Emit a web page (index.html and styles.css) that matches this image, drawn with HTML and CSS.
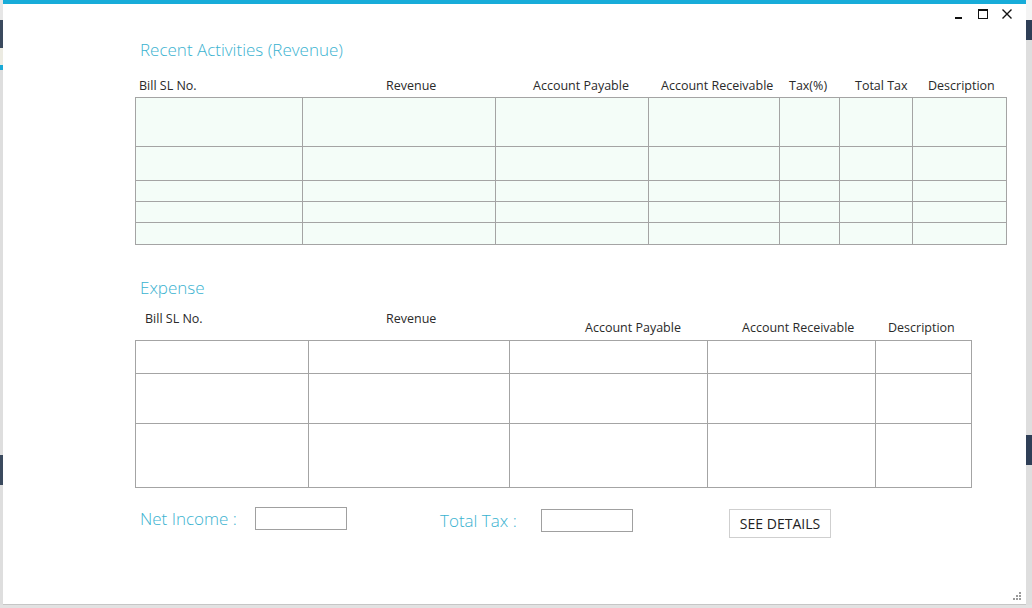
FILE: index.html
```html
<!DOCTYPE html>
<html>
<head>
<meta charset="utf-8">
<link rel="stylesheet" href="styles.css">
</head>
<body>
<div class="screen">
  <div class="strip strip-left">
    <div class="band b-light h20"></div>
    <div class="band b-dark h28"></div>
    <div class="band b-pale h17"></div>
    <div class="band b-cyan h5"></div>
    <div class="band b-gray h385"></div>
    <div class="band b-dark h30"></div>
    <div class="band b-gray grow"></div>
  </div>
  <div class="window">
    <div class="controls">
      <div class="ctl">
        <svg width="24" height="18" viewBox="0 0 24 18"><rect x="8" y="11" width="7" height="2" fill="#111"/></svg>
      </div>
      <div class="ctl">
        <svg width="24" height="18" viewBox="0 0 24 18"><rect x="7.5" y="3.5" width="9" height="9" fill="none" stroke="#111" stroke-width="1"/><rect x="7" y="3" width="10" height="2" fill="#111"/></svg>
      </div>
      <div class="ctl">
        <svg width="24" height="18" viewBox="0 0 24 18"><path d="M7.5 3.5 L16.5 12.5 M16.5 3.5 L7.5 12.5" stroke="#111" stroke-width="1.4" fill="none"/></svg>
      </div>
    </div>
    <div class="content">
      <h2 class="title t-first">Recent Activities (Revenue)</h2>
      <div class="heads heads-rev">
        <span class="hd r1">Bill SL No.</span>
        <span class="hd r2">Revenue</span>
        <span class="hd r3">Account Payable</span>
        <span class="hd r4">Account Receivable</span>
        <span class="hd r5">Tax(%)</span>
        <span class="hd r6">Total Tax</span>
        <span class="hd r7">Description</span>
      </div>
      <div class="grid grid-rev">
        <div></div><div></div><div></div><div></div><div></div><div></div><div></div>
        <div></div><div></div><div></div><div></div><div></div><div></div><div></div>
        <div></div><div></div><div></div><div></div><div></div><div></div><div></div>
        <div></div><div></div><div></div><div></div><div></div><div></div><div></div>
        <div></div><div></div><div></div><div></div><div></div><div></div><div></div>
      </div>

      <h2 class="title t-second">Expense</h2>
      <div class="heads heads-exp">
        <span class="hd e1">Bill SL No.</span>
        <span class="hd e2">Revenue</span>
        <span class="hd e3 low">Account Payable</span>
        <span class="hd e4 low">Account Receivable</span>
        <span class="hd e5 low">Description</span>
      </div>
      <div class="grid grid-exp">
        <div></div><div></div><div></div><div></div><div></div>
        <div></div><div></div><div></div><div></div><div></div>
        <div></div><div></div><div></div><div></div><div></div>
      </div>

      <div class="totals">
        <span class="lbl lbl-net">Net Income :</span>
        <span class="box box-net"></span>
        <span class="lbl lbl-tax">Total Tax :</span>
        <span class="box box-tax"></span>
        <button class="btn">SEE DETAILS</button>
      </div>
    </div>
    <div class="grip">
      <svg width="10" height="10" viewBox="0 0 10 10">
        <rect x="7" y="1" width="2" height="2" fill="#9a9a9a"/>
        <rect x="4" y="4" width="2" height="2" fill="#9a9a9a"/>
        <rect x="7" y="4" width="2" height="2" fill="#9a9a9a"/>
        <rect x="1" y="7" width="2" height="2" fill="#9a9a9a"/>
        <rect x="4" y="7" width="2" height="2" fill="#9a9a9a"/>
        <rect x="7" y="7" width="2" height="2" fill="#9a9a9a"/>
      </svg>
    </div>
  </div>
  <div class="strip strip-right">
    <div class="band b-white h20"></div>
    <div class="band b-navy h20"></div>
    <div class="band b-gray h395"></div>
    <div class="band b-navy h30"></div>
    <div class="band b-gray grow"></div>
  </div>
</div>
</body>
</html>
```
FILE: styles.css
```css
* { box-sizing: border-box; }
html, body { margin: 0; padding: 0; }
body {
  width: 1032px;
  height: 608px;
  overflow: hidden;
  background: #e2e2e2;
  font-family: "Open Sans", "Noto Sans", sans-serif;
  color: #333;
}
.screen {
  display: flex;
  width: 1032px;
  height: 608px;
}
.strip {
  display: flex;
  flex-direction: column;
  height: 605px;
}
.strip-left { width: 3px; }
.strip-right { width: 6px; }
.band { width: 100%; }
.grow { flex: 1; }
.h5 { height: 5px; }
.h17 { height: 17px; }
.h20 { height: 20px; }
.h28 { height: 28px; }
.h30 { height: 30px; }
.h385 { height: 385px; }
.h395 { height: 395px; }
.b-light { background: #e6e6e6; }
.b-white { background: #f4f4f4; }
.b-dark { background: #3b4a5e; }
.b-navy { background: #2f3f57; }
.b-pale { background: #ecebe2; }
.b-cyan { background: #1aa9d6; }
.b-gray { background: #dedede; }

.window {
  width: 1023px;
  height: 605px;
  background: #fff;
  border-top: 4px solid #17acd9;
  border-bottom: 1px solid #c6c6c6;
  display: flex;
  flex-direction: column;
}
.controls {
  display: flex;
  justify-content: flex-end;
  padding-right: 7px;
  margin-top: 2px;
  height: 18px;
}
.ctl { width: 24px; height: 18px; }
.ctl svg { display: block; }

.content {
  padding-left: 132px;
  flex: 1;
}
.title {
  margin: 0;
  font-weight: 300;
  font-size: 17px;
  line-height: 20px;
  color: #3ab2d0;
  padding-left: 5px;
}
.t-first { margin-top: 16px; }
.t-second { margin-top: 33px; }

.heads {
  display: grid;
  font-size: 12.5px;
  line-height: 16px;
  color: #2a2a2a;
  align-items: start;
}
.heads-rev {
  margin-top: 18px;
  margin-bottom: 3px;
  grid-template-columns: 167px 193px 153px 131px 60px 73px 94px;
}
.heads-exp {
  margin-top: 13px;
  margin-bottom: 4px;
  grid-template-columns: 173px 201px 198px 168px 96px;
}
.hd { white-space: nowrap; }
.low { padding-top: 9px; }
.r1 { padding-left: 4px; }
.r2 { padding-left: 84px; }
.r3 { padding-left: 38px; }
.r4 { padding-left: 13px; }
.r5 { padding-left: 10px; }
.r6 { padding-left: 16px; }
.r7 { padding-left: 16px; }
.e1 { padding-left: 10px; }
.e2 { padding-left: 78px; }
.e3 { padding-left: 76px; }
.e4 { padding-left: 35px; }
.e5 { padding-left: 13px; }

.grid {
  display: grid;
  gap: 1px;
  background: #a4a4a4;
  border: 1px solid #a4a4a4;
}
.grid-rev {
  width: 872px;
  grid-template-columns: 166px 192px 152px 130px 59px 72px 93px;
  grid-template-rows: 48px 33px 20px 20px 21px;
}
.grid-rev > div { background: #f4fdf8; }
.grid-exp {
  width: 837px;
  grid-template-columns: 172px 200px 197px 167px 95px;
  grid-template-rows: 32px 49px 63px;
}
.grid-exp > div { background: #fff; }

.totals {
  display: flex;
  align-items: flex-start;
  margin-top: 19px;
}
.lbl {
  font-weight: 300;
  font-size: 17px;
  line-height: 20px;
  color: #3ab2d0;
  white-space: nowrap;
}
.lbl-net { width: 120px; padding-left: 5px; margin-top: 2px; }
.lbl-tax { width: 101px; margin-left: 93px; margin-top: 4px; }
.box {
  display: block;
  width: 92px;
  height: 23px;
  border: 1px solid #a0a0a0;
  background: #fff;
}
.box-tax { margin-top: 2px; }
.btn {
  margin: 2px 0 0 96px;
  width: 102px;
  height: 29px;
  padding: 0;
  border: 1px solid #cfcfcf;
  background: #fff;
  font-family: "Open Sans", "Noto Sans", sans-serif;
  font-size: 14px;
  color: #222;
}
.grip {
  align-self: flex-end;
  margin: 0 4px 3px 0;
  height: 10px;
}
.grip svg { display: block; }
```
